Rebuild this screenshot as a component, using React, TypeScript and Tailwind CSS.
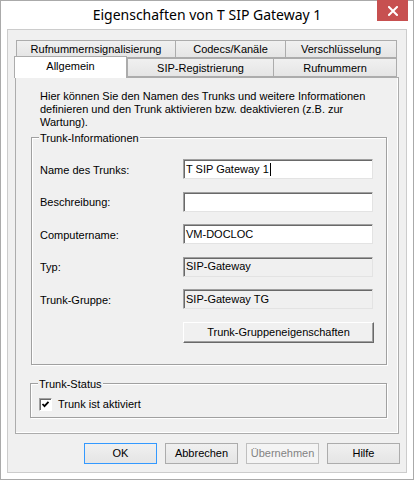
import type { ReactNode } from "react";

const ui = "font-['Liberation_Sans',Arial,sans-serif] text-[11px] leading-[13px] text-black";

function Tab({
  label,
  width,
  selected = false,
}: {
  label: string;
  width: string;
  selected?: boolean;
}) {
  if (selected) {
    return (
      <div
        className={`relative z-10 -mt-[2px] flex h-[22px] shrink-0 items-start justify-center border border-b-0 border-[#acacac] bg-white pt-[3px] ${width}`}
      >
        {label}
      </div>
    );
  }
  return (
    <div
      className={`-ml-px flex h-full shrink-0 items-center justify-center border border-[#acacac] bg-gradient-to-b from-[#f0f0f0] to-[#e5e5e5] pt-px first:ml-0 ${width}`}
    >
      {label}
    </div>
  );
}

function Field({
  label,
  value,
  readOnly = false,
  caret = false,
}: {
  label: string;
  value: string;
  readOnly?: boolean;
  caret?: boolean;
}) {
  return (
    <div className="flex h-[20px] items-center">
      <div className="w-[143px] shrink-0 pt-[2px]">{label}</div>
      <div
        className={`flex h-[20px] w-[190px] items-center border border-t-[#a0a0a0] border-l-[#a0a0a0] border-r-[#e3e3e3] border-b-[#e3e3e3] pl-[2px] shadow-[inset_1px_1px_0_#696969] ${
          readOnly ? "bg-[#f0f0f0]" : "bg-white"
        }`}
      >
        <span>{value}</span>
        {caret && <span className="ml-px h-[13px] w-px bg-black" />}
      </div>
    </div>
  );
}

function Group({
  title,
  className,
  children,
}: {
  title: string;
  className: string;
  children: ReactNode;
}) {
  return (
    <div
      className={`border border-[#a0a0a0] shadow-[inset_1px_1px_0_#fff,1px_1px_0_#fff] ${className}`}
    >
      <div className="-mt-[7px] ml-[7px] h-[14px] w-fit bg-[#f0f0f0] px-px leading-[14px]">
        {title}
      </div>
      {children}
    </div>
  );
}

function DialogButton({
  label,
  variant = "normal",
}: {
  label: string;
  variant?: "default" | "normal" | "disabled";
}) {
  const look =
    variant === "default"
      ? "border-[#3399ff] bg-gradient-to-b from-[#f0f0f0] to-[#e5e5e5] text-black"
      : variant === "disabled"
        ? "border-[#bfbfbf] bg-[#f4f4f4] text-[#838383]"
        : "border-[#acacac] bg-gradient-to-b from-[#f0f0f0] to-[#e5e5e5] text-black";
  return (
    <div
      className={`flex h-[21px] w-[73px] items-center justify-center border ${look}`}
    >
      {label}
    </div>
  );
}

export default function App() {
  return (
    <div
      className={`flex h-[480px] w-[414px] flex-col border border-[#aaaaaa] bg-white ${ui}`}
    >
      {/* title bar */}
      <div className="relative flex h-[28px] shrink-0 items-center justify-center">
        <span className="font-['Noto_Sans',sans-serif] text-[14px] leading-[20px] text-[#000]">
          Eigenschaften von T SIP Gateway 1
        </span>
        <div className="absolute right-[5px] top-[-1px] flex h-[21px] w-[31px] items-center justify-center bg-[#c75050]">
          <svg width="10" height="10" viewBox="0 0 10 10">
            <path
              d="M1 1 L9 9 M9 1 L1 9"
              stroke="#fff"
              strokeWidth="2"
              strokeLinecap="square"
            />
          </svg>
        </div>
      </div>

      {/* client area */}
      <div className="mx-[6px] mb-[6px] flex flex-1 flex-col border border-[#cccccc] bg-[#f0f0f0]">
        <div className="ml-[6px] mr-[7px] mt-[10px] flex flex-col">
          <div className="ml-[2px] flex h-[18px]">
            <Tab label="Rufnummernsignalisierung" width="w-[160px]" />
            <Tab label="Codecs/Kanäle" width="w-[111px]" />
            <Tab label="Verschlüsselung" width="w-[112px]" />
          </div>
          <div className="flex h-[19px] items-start">
            <Tab label="Allgemein" width="w-[113px]" selected />
            <div className="ml-0 flex h-full">
              <Tab label="SIP-Registrierung" width="w-[147px]" />
              <Tab label="Rufnummern" width="w-[124px]" />
            </div>
          </div>

          {/* tab page */}
          <div className="ml-px flex h-[357px] flex-col border border-[#acacac] bg-[#f0f0f0] shadow-[inset_-1px_-1px_0_#fff]">
            <p className="ml-[24px] mr-[20px] mt-[12px]">
              Hier können Sie den Namen des Trunks und weitere Informationen
              definieren und den Trunk aktivieren bzw. deaktivieren (z.B. zur
              Wartung).
            </p>

            <Group
              title="Trunk-Informationen"
              className="ml-[15px] mr-[11px] mt-[8px] pb-[21px]"
            >
              <div className="ml-[8px] mt-[14px] flex flex-col gap-[12.5px]">
                <Field label="Name des Trunks:" value="T SIP Gateway 1" caret />
                <Field label="Beschreibung:" value="" />
                <Field label="Computername:" value="VM-DOCLOC" />
                <Field label="Typ:" value="SIP-Gateway" readOnly />
                <Field label="Trunk-Gruppe:" value="SIP-Gateway TG" readOnly />
                <div className="ml-[143px] flex h-[21px] w-[191px] items-center justify-center border border-l-white border-t-white border-r-[#696969] border-b-[#696969] bg-[#f0f0f0] shadow-[inset_-1px_-1px_0_#a0a0a0]">
                  Trunk-Gruppeneigenschaften
                </div>
              </div>
            </Group>

            <Group
              title="Trunk-Status"
              className="ml-[14px] mr-[11px] mt-[18px] pb-[6px]"
            >
              <div className="ml-[8px] mt-[7px] flex h-[13px] items-center gap-[6px]">
                <div className="flex h-[13px] w-[13px] items-center justify-center border border-l-[#a0a0a0] border-t-[#a0a0a0] border-r-white border-b-white bg-white shadow-[inset_1px_1px_0_#696969]">
                  <svg width="9" height="9" viewBox="0 0 9 9">
                    <path
                      d="M1.5 4 L3.5 6.2 L7.5 1.8"
                      fill="none"
                      stroke="#000"
                      strokeWidth="1.8"
                    />
                  </svg>
                </div>
                <span className="pt-px">Trunk ist aktiviert</span>
              </div>
            </Group>
          </div>
        </div>

        {/* dialog buttons */}
        <div className="mr-[6px] mt-[9px] flex justify-end gap-[8px]">
          <DialogButton label="OK" variant="default" />
          <DialogButton label="Abbrechen" />
          <DialogButton label="Übernehmen" variant="disabled" />
          <DialogButton label="Hilfe" />
        </div>
      </div>
    </div>
  );
}
